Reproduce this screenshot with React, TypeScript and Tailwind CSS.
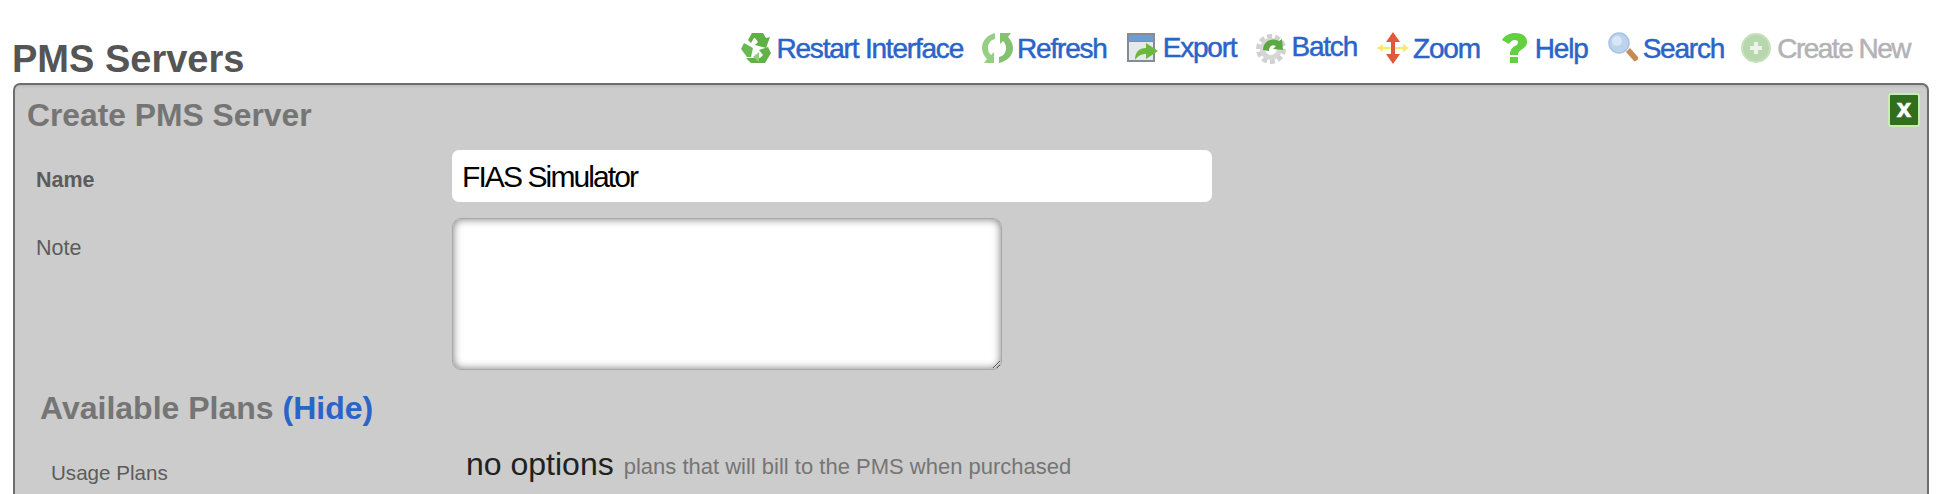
import type { ReactNode } from "react";

function IconWrap({ children }: { children: ReactNode }) {
  return (
    <svg viewBox="0 0 32 32" className="w-8 h-8 shrink-0 blur-[0.7px]">
      {children}
    </svg>
  );
}

const RecycleIcon = () => (
  <IconWrap>
    <path d="M8 8l4-7h11l3 5 4-1-4 11-11-3 3-3-3-4h-1l-3 5z" fill="#5fb045" />
    <path d="M1 17l3-6 9 5-2 9H7z" fill="#6ab852" />
    <path d="M6 26l5 5h14l6-10-3-6-9 3 4 5-3 3H13z" fill="#62b048" />
    <path d="M13 25l6-5v10z" fill="#8fcf7b" />
  </IconWrap>
);

const RefreshIcon = () => (
  <IconWrap>
    <path d="M14 1v6C9 8 7 12 7 16c0 3 1 5 3 7l3-3v11H3l3-4c-3-3-5-7-5-11C1 9 6 3 14 1z" fill="#94cf83" />
    <path d="M18 31v-6c5-1 7-5 7-9 0-3-1-5-3-7l-3 3V1h11l-3 4c3 3 5 7 5 11 0 7-5 13-14 15z" fill="#83c270" />
  </IconWrap>
);

const ExportIcon = () => (
  <IconWrap>
    <rect x="0" y="1" width="28" height="29" fill="#868c94" />
    <rect x="2" y="3" width="24" height="6" fill="#6c9ed6" />
    <rect x="2" y="10" width="24" height="18" fill="#e4e9ee" />
    <path d="M8 28c0-8 4-12 11-12v-5l12 8-12 8v-5c-5 0-8 2-11 6z" fill="#6cb83f" />
  </IconWrap>
);

const BatchIcon = () => (
  <IconWrap>
    <circle cx="16" cy="17" r="12" fill="none" stroke="#d0d0d0" strokeWidth="6" strokeDasharray="4.7 2.8" />
    <circle cx="16" cy="17" r="8.5" fill="none" stroke="#d6d6d6" strokeWidth="5" />
    <path d="M8 18c0-9 9-13 16-9l3-2 1 11-10-1 3-3c-4-2-7 0-7 5z" fill="#5da843" />
  </IconWrap>
);

const ZoomIcon = () => (
  <IconWrap>
    <path d="M0 16l6-4v3h20v-3l6 4-6 4v-3H6v3z" fill="#fbe96a" />
    <path d="M16 0l7 10h-5v12h5l-7 10-7-10h5V10H9z" fill="#e0593a" />
  </IconWrap>
);

const HelpIcon = () => (
  <IconWrap>
    <path d="M3 8C6 3 11 1 16 1c7 0 12 3 12 9 0 4-3 6-6 8-2 1-3 3-3 5h-8c0-4 1-7 5-9 2-1 3-2 3-4 0-1-1-2-3-2-3 0-5 2-6 4z" fill="#62d03f" />
    <rect x="11" y="25" width="8" height="6" fill="#62d03f" />
  </IconWrap>
);

const SearchIcon = () => (
  <IconWrap>
    <path d="M19 20l4-4 8 9c1 2-2 5-4 4z" fill="#c68a55" />
    <circle cx="12" cy="11" r="10" fill="#bcd3ee" stroke="#a9c2e2" strokeWidth="1.5" />
    <circle cx="10" cy="9" r="5" fill="#d8e6f6" />
  </IconWrap>
);

const CreateIcon = () => (
  <IconWrap>
    <circle cx="16" cy="16" r="14" fill="#b7d7ad" stroke="#c8e0c0" strokeWidth="2" />
    <path d="M14 10h4v4h4v4h-4v4h-4v-4h-4v-4h4z" fill="#edf3ea" />
  </IconWrap>
);

const actions = [
  { label: "Restart Interface", icon: <RecycleIcon />, cls: "mt-[2px]", gap: "" },
  { label: "Refresh", icon: <RefreshIcon />, cls: "mt-[2px]", gap: "-ml-[1px]" },
  { label: "Export", icon: <ExportIcon />, cls: "mt-0", gap: "ml-[1px]" },
  { label: "Batch", icon: <BatchIcon />, cls: "-mt-[3px]", gap: "" },
  { label: "Zoom", icon: <ZoomIcon />, cls: "mt-[2px]", gap: "ml-[1px]" },
  { label: "Help", icon: <HelpIcon />, cls: "mt-[2px]", gap: "" },
  { label: "Search", icon: <SearchIcon />, cls: "mt-[2px]", gap: "" },
];

export default function App() {
  return (
    <div className="h-[494px] overflow-hidden bg-white font-['Liberation_Sans',Arial,sans-serif]">
      <div className="flex items-start justify-between pl-[12px] pr-[32px] h-[83px]">
        <h1 className="mt-[39px] text-[38px] leading-[40px] font-bold text-[#555555]">PMS Servers</h1>
        <div className="flex gap-[19px] items-center mt-[31px]">
          {actions.map((a) => (
            <a key={a.label} className={`flex items-center gap-[4px] text-[28px] leading-8 tracking-[-1.2px] text-[#2a64c8] [-webkit-text-stroke:0.5px_#2a64c8] ${a.gap}`}>
              {a.icon}
              <span className={a.cls}>{a.label}</span>
            </a>
          ))}
          <span className="-ml-[3px] flex items-center gap-[5px] text-[28px] leading-8 tracking-[-1.5px] text-[#b3b3b3] [-webkit-text-stroke:0.5px_#b3b3b3]">
            <CreateIcon />
            <span className="mt-[2px]">Create New</span>
          </span>
        </div>
      </div>
      <section className="mx-[13px] h-[420px] rounded-t-[7px] border-2 border-b-0 border-[#6e6e6e] bg-[#cccccc] shadow-[inset_0_3px_3px_-2px_rgba(0,0,0,0.12)] relative">
        <div className="absolute right-[7px] top-[8px] w-[32px] h-[34px] bg-[#316f1e] rounded-[3px] border-2 border-[#c5eeb0] flex items-center justify-center text-white font-bold text-[26px] leading-none pb-[4px] [-webkit-text-stroke:0.6px_#ffffff]">x</div>
        <h2 className="pl-[12px] pt-[12px] text-[31.8px] leading-9 font-bold text-[#757575]">Create PMS Server</h2>
        <div className="flex mt-[17px]">
          <label className="w-[437px] pl-[21px] pt-[18px] text-[21.5px] leading-6 font-bold text-[#5c5c5c]">Name</label>
          <input readOnly value="FIAS Simulator" className="w-[760px] h-[52px] rounded-[7px] bg-white pl-[10px] pt-[1px] text-[30px] tracking-[-1.9px] text-black outline-none" />
        </div>
        <div className="flex mt-[16px]">
          <label className="w-[437px] pl-[21px] pt-[18px] text-[21.5px] leading-6 text-[#5c5c5c]">Note</label>
          <textarea readOnly className="w-[550px] h-[152px] rounded-[9px] border border-[#a8a8a8] bg-white shadow-[inset_0_0_8px_rgba(0,0,0,0.55)] outline-none resize" />
        </div>
        <h3 className="pl-[25px] pt-[20px] text-[32px] leading-9 font-bold text-[#757575]">
          Available Plans <a className="text-[#2a64c8]">(Hide)</a>
        </h3>
        <div className="flex items-start mt-[20px]">
          <label className="w-[451px] pl-[36px] pt-[15px] text-[20.6px] leading-6 text-[#5c5c5c]">Usage Plans</label>
          <span className="text-[32px] leading-9 text-[#212121]">no options</span>
          <span className="ml-[10px] pt-[9px] text-[22px] leading-6 text-[#757575]">plans that will bill to the PMS when purchased</span>
        </div>
      </section>
    </div>
  );
}
